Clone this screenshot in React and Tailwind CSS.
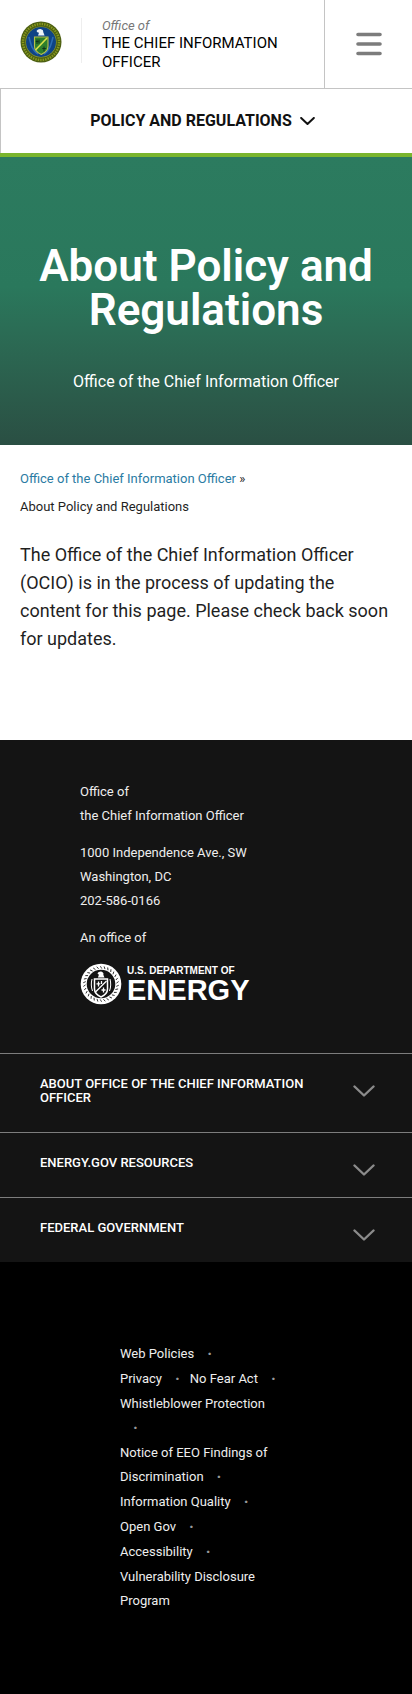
import React from "react";

const RING = Array.from({ length: 30 }, (_, i) => i * 12);

function ColorSeal() {
  return (
    <svg viewBox="0 0 42 42" className="size-[42px] shrink-0" role="img" aria-label="Department of Energy seal">
      <circle cx="21" cy="21" r="20.5" fill="#4c5f12" />
      <circle cx="21" cy="21" r="18" fill="none" stroke="#8a9a1e" strokeWidth="2.4" strokeDasharray="1.4 1.1" />
      <circle cx="21" cy="21" r="15.6" fill="#8f9a2c" />
      <circle cx="21" cy="21" r="15" fill="#0f4486" />
      <path d="M9 16c2 8 3 13 9 17M33 16c-2 8-3 13-9 17" stroke="#2c6cb4" strokeWidth="1.6" fill="none" />
      <path d="M16.500 10c1-1.500 3-2.300 4.500-1.800 2 .4 2.400 1.600 2.200 2.800l1.400 3.500h-6.600l1-2.800-1.600-.5z" fill="#eef3f6" />
      <path d="M14.500 16h13.500v9.500c0 4-3 6.200-6.700 8-3.800-1.800-6.800-4-6.800-8z" fill="#2e7f2b" stroke="#b9c04a" strokeWidth="1.100" />
      <path d="M15.500 29 27 17" stroke="#d8e04a" strokeWidth="1.700" />
      <path d="M17 18.500v4.500M15.800 20.500h2.700M19 18.500v4M24 25.500v5M22.300 27.500h3.600" stroke="#10331b" strokeWidth="1" />
    </svg>
  );
}

function WhiteSeal() {
  return (
    <svg viewBox="0 0 42 42" className="size-[42px] shrink-0" aria-hidden="true">
      <circle cx="21" cy="21" r="20.300" fill="#fff" />
      {RING.map((a) => (
        <path key={a} d="M20.400 3.200l1.400 2.400" stroke="#141414" strokeWidth=".8" transform={`rotate(${a} 21 21)`} />
      ))}
      <circle cx="21" cy="21" r="14.300" fill="#141414" />
      <path d="M17.500 10.500c1-1.600 3-2.400 4.500-1.600 1.500.6 1.800 1.800 1.300 2.900l1.200 2.700h-6.600l1-2.700z" fill="#fff" />
      <path d="M14.500 16h13v10c0 4-2.800 6.300-6.500 8-3.700-1.700-6.500-4-6.500-8z" fill="#141414" stroke="#fff" strokeWidth="1.500" />
      <path d="M15.500 29 26.500 18M18.500 18.500v5M16.500 20.800h3.800M21.500 18v3M23.500 24.500v5M21.500 27h4" stroke="#fff" strokeWidth="1.300" />
      <path d="M12 16c-1 4-1 8 .5 12M30 16c1 4 1 8-.5 12" fill="none" stroke="#fff" strokeWidth="1" />
    </svg>
  );
}

function Chevron({ className }) {
  return (
    <svg viewBox="0 0 22 12" className={className} fill="none" stroke="currentColor" strokeLinecap="round" strokeLinejoin="round" aria-hidden="true">
      <path d="M1.500 1.500 11 10.500l9.500-9" />
    </svg>
  );
}

function FooterSection({ title }) {
  return (
    <button type="button" className="flex w-full items-start justify-between border-t border-[#7d7d7d] pt-[23px] pr-[37px] pb-[27px] pl-10 text-left text-white">
      <span className="w-[276px] text-[13px] leading-[14px] font-medium">{title}</span>
      <Chevron className="mt-2 -mb-2 h-3 w-[22px] stroke-[2.4] text-[#8b8b8b]" />
    </button>
  );
}

const legalRows = [
  ["Web Policies"],
  ["Privacy", "No Fear Act"],
  ["Whistleblower Protection"],
  ["Notice of EEO Findings of Discrimination"],
  ["Information Quality"],
  ["Open Gov"],
  ["Accessibility"],
  ["Vulnerability Disclosure Program"],
];

function LegalLink({ label, last }) {
  return (
    <>
      <a href="#">{label}</a>
      {!last && <span className="inline-block pr-2.5 pl-[13px] align-top text-base leading-6 font-bold text-[#999]">·</span>}
    </>
  );
}

export default function App() {
  return (
    <div className="bg-white font-['Roboto',sans-serif] text-[#1f1f1f]">
      <header>
        <div className="flex h-[88px]">
          <a href="#" className="flex min-w-0 flex-1 items-start pl-5">
            <span className="mt-[21px] flex"><ColorSeal /></span>
            <span className="mt-[18px] ml-[19px] h-[45px] w-px bg-[#eeeeee]" />
            <span className="mt-[17px] ml-5 min-w-0 text-black">
              <span className="block text-[13px] leading-[17px] text-[#777] italic">Office of</span>
              <span className="block text-[15px] leading-[19px]">THE CHIEF INFORMATION OFFICER</span>
            </span>
          </a>
          <button type="button" aria-label="Menu" className="flex w-[88px] items-center justify-center border-l border-[#c4c4c4]">
            <svg viewBox="0 0 26 24" className="h-6 w-[26px]" stroke="#7c7c7c" strokeWidth="3.600" strokeLinecap="round" aria-hidden="true">
              <path d="M2 2.500h22M2 12h22M2 21.500h22" />
            </svg>
          </button>
        </div>
        <button type="button" className="flex h-[65px] w-full items-center justify-center gap-2 border-t border-l border-[#c4c4c4] pr-2 text-base font-bold text-[#111]">
          POLICY AND REGULATIONS
          <Chevron className="h-2 w-[15px] stroke-[3]" />
        </button>
      </header>

      <main>
        <section className="border-t-4 border-[#7ab52e] bg-linear-to-b from-[#2c7b5f] via-[#2a785c] via-45% to-[#2a4f43] px-8 pt-[87px] pb-[51px] text-center text-white">
          <h1 className="text-[44px] leading-[44px] font-semibold">About Policy and Regulations</h1>
          <p className="mt-[38px] text-base leading-6">Office of the Chief Information Officer</p>
        </section>

        <nav aria-label="Breadcrumb" className="px-5 pt-5 text-[13px] leading-7">
          <div><a href="#" className="text-[#2a7ba3]">Office of the Chief Information Officer</a> »</div>
          <div>About Policy and Regulations</div>
        </nav>
        <p className="px-5 pt-5 pb-[87px] text-lg leading-7">
          The Office of the Chief Information Officer (OCIO) is in the process of updating the content for this page. Please check back soon for updates.
        </p>
      </main>

      <footer className="bg-[#141414] text-[13px] text-[#eeeeee]">
        <div className="px-20 pt-10 pb-12 leading-6">
          <p>Office of<br />the Chief Information Officer</p>
          <p className="mt-[13px]">1000 Independence Ave., SW<br />Washington, DC<br />202-586-0166</p>
          <p className="mt-[13px]">An office of</p>
          <a href="#" className="mt-[13px] flex items-center gap-[5px] font-['Liberation_Sans',sans-serif] font-bold text-white">
            <WhiteSeal />
            <span className="whitespace-nowrap">
              <span className="block text-[10px] leading-[13px]">U.S. DEPARTMENT OF</span>
              <span className="block text-[29px] leading-[27px]">ENERGY</span>
            </span>
          </a>
        </div>
        <FooterSection title="ABOUT OFFICE OF THE CHIEF INFORMATION OFFICER" />
        <FooterSection title="ENERGY.GOV RESOURCES" />
        <FooterSection title="FEDERAL GOVERNMENT" />
        <ul className="flex flex-col gap-px bg-black px-[120px] pt-20 pb-[82px] leading-6">
          {legalRows.map((row, i) => (
            <li key={row[0]}>
              {row.map((label) => (
                <LegalLink key={label} label={label} last={i === legalRows.length - 1} />
              ))}
            </li>
          ))}
        </ul>
      </footer>
    </div>
  );
}
